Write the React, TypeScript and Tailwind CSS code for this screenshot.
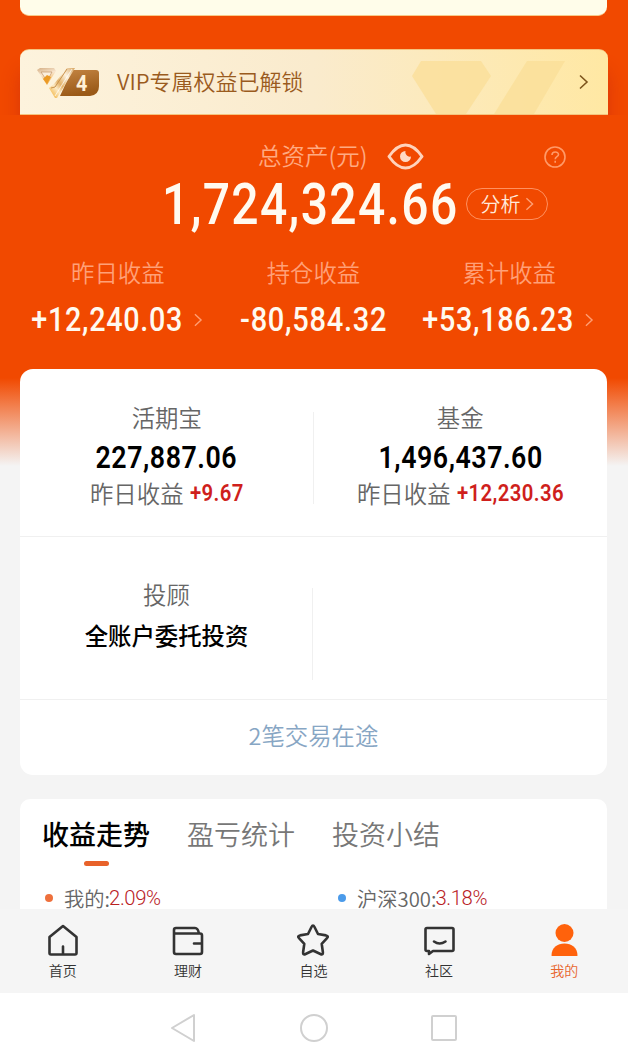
import { ReactNode } from "react";
import clsx from "clsx";

const stats = [
  { label: "昨日收益", value: "+12,240.03", arrow: true },
  { label: "持仓收益", value: "-80,584.32", arrow: false },
  { label: "累计收益", value: "+53,186.23", arrow: true },
];

const accounts = [
  { name: "活期宝", total: "227,887.06", gain: "+9.67", gainWidth: "w-[54px]" },
  { name: "基金", total: "1,496,437.60", gain: "+12,230.36", gainWidth: "w-[107px]" },
];

function Chevron({ className }: { className?: string }) {
  return (
    <svg viewBox="0 0 10 16" fill="none" stroke="currentColor" strokeWidth="1.6" className={className}>
      <path d="M1.5 1.5 8.5 8l-7 6.5" />
    </svg>
  );
}

// Narrow numerals
function Num({ children, className }: { children: ReactNode; className?: string }) {
  return (
    <span className={clsx("inline-block whitespace-nowrap font-[Roboto,'Noto_Sans_CJK_SC',sans-serif]", className)}>
      {children}
    </span>
  );
}

function VipBadge() {
  return (
    <svg width="64" height="34" viewBox="0 0 64 34" className="shrink-0">
      <defs>
        <linearGradient id="plate" x1="0" y1="0" x2="0.3" y2="1">
          <stop offset="0" stopColor="#c48543" />
          <stop offset="1" stopColor="#9a5a18" />
        </linearGradient>
        <linearGradient id="gem" x1="0.2" y1="0" x2="0.5" y2="1">
          <stop offset="0" stopColor="#d9b58c" />
          <stop offset="0.4" stopColor="#f9e6cf" />
          <stop offset="1" stopColor="#f1a73a" />
        </linearGradient>
        <linearGradient id="gold" x1="1" y1="0" x2="0" y2="1">
          <stop offset="0" stopColor="#d8a560" />
          <stop offset="0.3" stopColor="#fdf1dc" />
          <stop offset="0.55" stopColor="#e3b268" />
          <stop offset="0.7" stopColor="#fbe9c4" />
          <stop offset="1" stopColor="#f0a51d" />
        </linearGradient>
      </defs>
      <path d="M36 5h24q3 0 3 3v13q0 9-9 10H24z" fill="url(#plate)" />
      <path d="M1 5 4 3h14l2 3-9 14z" fill="url(#gem)" />
      <path d="M5 7h11l-5 9z" fill="#fbeedd" stroke="#b98656" strokeWidth="0.6" />
      <path d="m7 14 4-4 4 2-4 7z" fill="#eb9a25" />
      <path d="m13 23 5-4L31 3h8L21 33h-2z" fill="url(#gold)" />
      <path d="m31 4-12 18-4 1" fill="none" stroke="#c9924c" strokeWidth="1" />
      <path d="m36 4-17 27" fill="none" stroke="#fff" strokeWidth="1" opacity="0.7" />
      <g transform="translate(40 26) scale(.9 1)">
        <text fontSize="22" fontWeight="700" fill="#fff1d6" fontFamily="Roboto, sans-serif">4</text>
      </g>
    </svg>
  );
}

function VipBanner() {
  return (
    <div className="h-[66px] overflow-hidden px-5">
      <div className="relative flex h-full w-[588px] items-center rounded-t-[9px] border-y border-[#f5c47e] bg-linear-to-r from-[#fdf3dd] via-[#faebcd] to-[#ffe8a3] pl-4 shadow-[0_22px_18px_rgba(190,30,20,0.45)]">
        <svg width="153" height="54" viewBox="0 0 153 54" className="absolute right-[43px] bottom-0" fill="#fbdf98" opacity="0.75">
          <path d="M9 1h60l10 15-25 38H24L0 16z" />
          <path d="M115 1h38l-31 53H82z" />
        </svg>
        <VipBadge />
        <span className="-mt-[3px] ml-[17px] flex-1 text-[22px] font-[350] text-[#9a5b1e]">VIP专属权益已解锁</span>
        <Chevron className="relative mr-[19px] h-4 w-[11px] text-[#7d541c]" />
      </div>
    </div>
  );
}

function Summary() {
  return (
    <div className="h-[254px]">
      <div className="flex h-[56px] items-center pt-[27px] pl-[258px]">
        <span className="-mt-[3px] w-[129px] text-[23.500px] leading-[26px] font-[350] text-[#ffaa82]">总资产(元)</span>
        <svg width="37" height="27" viewBox="0 0 37 27" fill="none">
          <path d="M2 13.500Q10 2 18.500 2T35 13.500Q27 25 18.500 25T2 13.500Z" stroke="#ffd3bc" strokeWidth="3" strokeLinejoin="round" />
          <path d="M18.500 8a5.500 5.500 0 1 0 5.500 5.500 4.500 4.500 0 0 1-5.500-5.500Z" fill="#ffd9c4" />
        </svg>
        <svg width="22" height="22" viewBox="0 0 22 22" fill="none" stroke="#ff9a68" strokeWidth="1.600" className="ml-[120px]">
          <circle cx="11" cy="11" r="10" />
          <path d="M8 9c0-4 6.500-4 6.500-.5 0 2.200-3.300 2.200-3.300 4.700M11.200 14.800v2" />
        </svg>
      </div>
      <div className="flex h-[66px] items-center pl-[162px]">
        <Num className="mt-[2px] w-[304px] origin-left scale-x-[0.835] text-[57.500px] leading-[58px] font-medium tracking-[0.028em] text-[#fffaf0]">
          1,724,324.66
        </Num>
        <div className="flex h-8 w-[82px] items-center justify-center gap-1 rounded-full border border-[#ff9160] text-[20px] font-[350] text-[#ffeadc]">
          分析
          <Chevron className="h-[14px] w-[9px] text-[#ff9f74]" />
        </div>
      </div>
      <div className="grid w-[607px] grid-cols-3 pt-[3px] pl-5">
        {stats.map((s) => (
          <div key={s.label} className="pt-4 text-center">
            <p className="text-[23.400px] leading-8 font-[350] text-[#ffa078]">{s.label}</p>
            <div className="mt-[14px] flex h-9 items-center justify-center">
              <Num className={clsx("text-[33px] font-medium tracking-[0.025em] text-[#fffaf0]", s.arrow ? "-ml-[13px] scale-x-[0.87]" : "scale-x-[0.88]")}>
                {s.value}
              </Num>
              {s.arrow && <Chevron className="-ml-[2px] h-[14px] w-[10px] text-[#ff9f74]" />}
            </div>
          </div>
        ))}
      </div>
    </div>
  );
}

function Assets() {
  return (
    <div className="mx-5 h-[406px] w-[587px] rounded-[13px] bg-white text-center">
      <div className="flex h-[168px] items-start border-b border-[#f0f0f0]">
        {accounts.map((a, i) => (
          <div key={a.name} className="relative flex-1 pt-8">
            <p className="text-[23.400px] leading-8 font-[350] text-[#666]">{a.name}</p>
            <p className="mt-[6px] leading-[38px]">
              <Num className="scale-x-[0.85] text-[31.500px] font-semibold tracking-[0.02em] text-black">{a.total}</Num>
            </p>
            <p className="-mt-[5px] flex items-center justify-center text-[23.400px] leading-9 font-[350] text-[#666]">
              昨日收益
              <Num
                className={clsx(
                  "ml-[6px] origin-left scale-x-[0.865] text-left text-[23.500px] font-semibold tracking-[0.02em] text-[#cf1f1c]",
                  a.gainWidth,
                )}
              >
                {a.gain}
              </Num>
            </p>
            {i === 0 && <div className="absolute top-[43px] right-0 h-[92px] w-px bg-[#f0f0f0]" />}
          </div>
        ))}
      </div>
      <div className="flex h-[163px] border-b border-[#f0f0f0]">
        <div className="w-[292px] pt-[41px] pl-px">
          <p className="text-[23.400px] leading-8 font-[350] text-[#666]">投顾</p>
          <p className="mt-[9px] text-[23.400px] leading-8 font-medium text-black">全账户委托投资</p>
        </div>
        <div className="mt-[51px] h-[92px] w-px bg-[#f0f0f0]" />
      </div>
      <p className="text-[23.400px] leading-[71px] font-[350] text-[#87a6c4]">2笔交易在途</p>
    </div>
  );
}

function Trend() {
  return (
    <div className="mx-5 mt-6 h-[110px] w-[587px] overflow-hidden rounded-t-[10px] bg-white px-[22px]">
      <div className="flex gap-[37px] pt-[15px] text-[27px] leading-10 font-[350] text-[#777]">
        <div className="flex flex-col items-center font-medium text-black">
          收益走势
          <div className="mt-[7px] h-[5px] w-[25px] rounded-full bg-[#e8622a]" />
        </div>
        <div>盈亏统计</div>
        <div>投资小结</div>
      </div>
      <div className="mt-[21px] flex text-[20.300px] leading-[22px] font-[350] text-[#666]">
        <div className="flex w-[293px] items-center pl-[3px]">
          <i className="mr-[11px] size-2 rounded-full bg-[#ee703c]" />
          我的:<Num className="-ml-px tracking-[-0.02em] text-[#b9211f]">2.09%</Num>
        </div>
        <div className="flex items-center pl-[3px]">
          <i className="mr-[11px] size-2 rounded-full bg-[#4b9bea]" />
          沪深300:<Num className="-ml-px tracking-[-0.02em] text-[#b9211f]">3.18%</Num>
        </div>
      </div>
    </div>
  );
}

const tabs: { label: string; icon: ReactNode }[] = [
  {
    label: "首页",
    icon: <path d="M3.500 14 17 3l13.500 11v16q0 1.500-1.500 1.500H5q-1.500 0-1.500-1.500zM17 23.500v8" />,
  },
  {
    label: "理财",
    icon: <path d="M31 14v15q0 2-2 2H5q-2 0-2-2V7q0-2 2-2h19q3 0 4 5.500H4M27 10.500h2q2 0 2 2V17M31 20.500h-8" />,
  },
  {
    label: "自选",
    icon: (
      <path d="M15.500 4q1.500-3 3 0L22 11l8 1.400q3 .6 1 2.800l-5.300 5.600 1.200 8.500q.3 3-2.500 1.700L17 27.500 9.600 31q-2.800 1.300-2.500-1.700l1.200-8.500L3 15.200q-2-2.200 1-2.800l8-1.400z" />
    ),
  },
  {
    label: "社区",
    icon: <path d="M5 5h25q1.500 0 1.500 1.500v20q0 1.500-1.500 1.500H11l-4 3v-3H5q-1.500 0-1.500-1.500v-20Q3.500 5 5 5ZM12 18.500q5.500 4 11.500 0" />,
  },
  {
    label: "我的",
    icon: (
      <g fill="#ff620c" stroke="none">
        <circle cx="17.500" cy="10" r="9" />
        <path d="M4.500 32.500C4.500 24.500 10.500 20.500 17.500 20.500s13 4 13 12q0 .5-1 .5h-24q-1 0-1-.5Z" />
      </g>
    ),
  },
];

function TabBar() {
  return (
    <div className="grid h-[84px] w-[627px] grid-cols-5">
      {tabs.map((t, i) => (
        <div key={t.label} className={clsx("flex flex-col items-center pt-[14px] text-sm leading-5", i === 4 ? "text-[#e8662e]" : "text-[#333]")}>
          <svg width="34" height="35" viewBox="0 0 34 35" fill="none" stroke="currentColor" strokeWidth="2.600" strokeLinejoin="round" strokeLinecap="round">
            {t.icon}
          </svg>
          <span className="mt-[2px] font-[350]">{t.label}</span>
        </div>
      ))}
    </div>
  );
}

function SystemNav() {
  return (
    <div className="flex h-[69px] items-center justify-center gap-[103px] bg-white pr-[2px]">
      <svg width="28" height="30" viewBox="0 0 28 30" fill="none" stroke="#d0d0d0" strokeWidth="2" strokeLinejoin="round">
        <path d="M3 15 25 2v26z" />
      </svg>
      <div className="size-7 rounded-full border-2 border-[#d0d0d0]" />
      <div className="size-[26px] rounded-[2px] border-2 border-[#d0d0d0]" />
    </div>
  );
}

export default function App() {
  return (
    <div className="flex h-[1062px] w-[628px] flex-col overflow-hidden bg-[#f5f5f5] font-['Noto_Sans_CJK_SC',sans-serif]">
      <div className="h-[909px] bg-[linear-gradient(#f14900_0,#f14900_378px,#f4f4f4_466px)]">
        <div className="mx-5 h-4 w-[587px] rounded-b-[9px] border-b border-[#f8ca88] bg-[#fffdea]" />
        <div className="h-[33px]" />
        <VipBanner />
        <Summary />
        <Assets />
        <Trend />
      </div>
      <TabBar />
      <SystemNav />
    </div>
  );
}
